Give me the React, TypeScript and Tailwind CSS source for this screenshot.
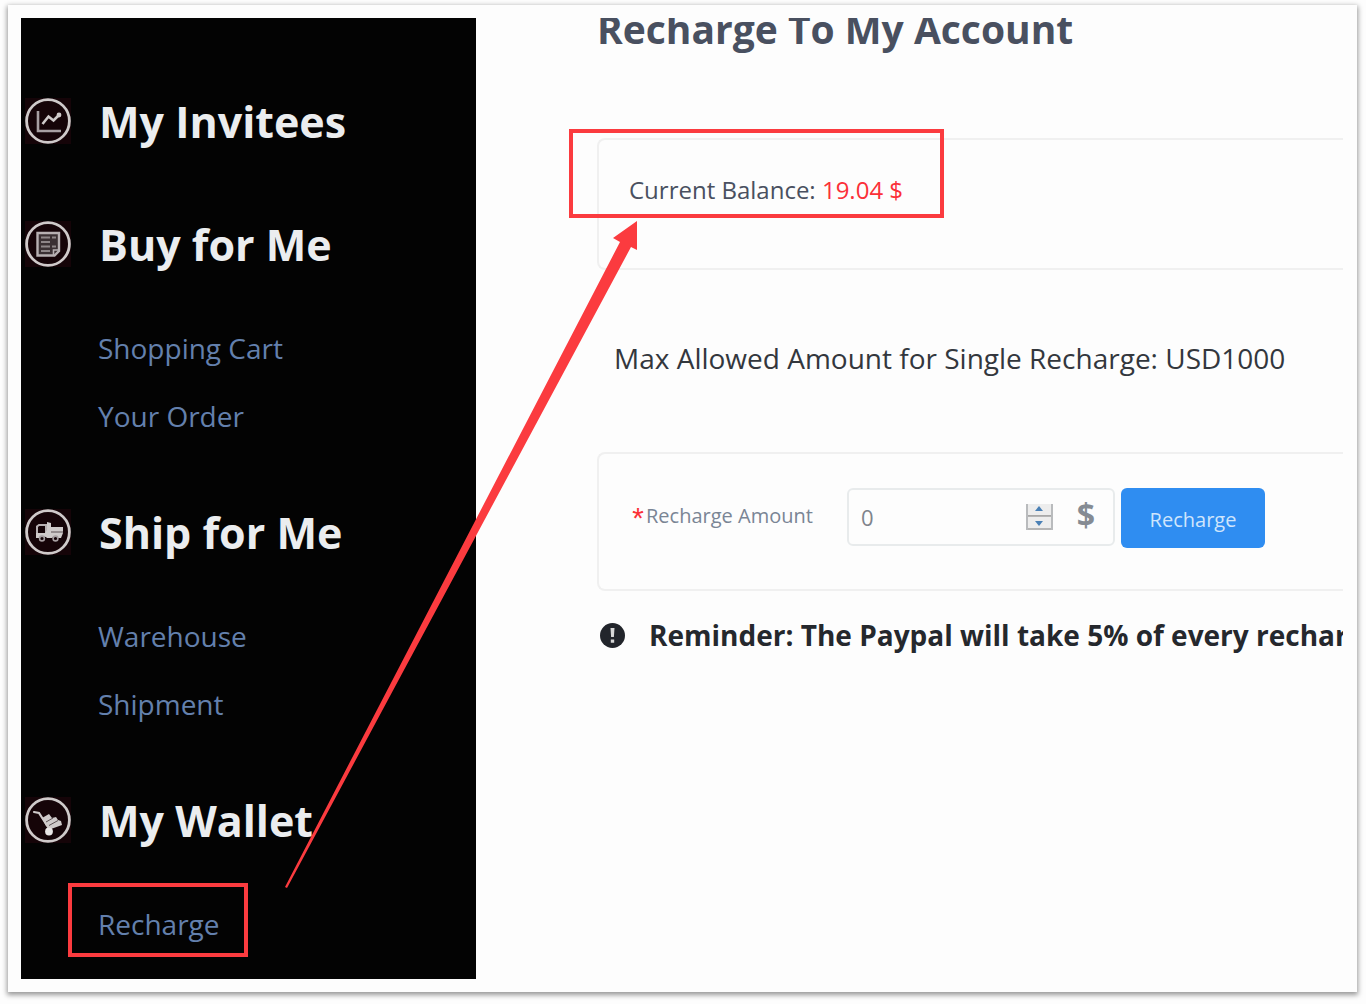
import { FormEvent, ReactNode, useState } from "react";

type Section = { title: string; icon: ReactNode; items: string[] };

const sections: Section[] = [
  { title: "My Invitees", icon: <ChartIcon />, items: [] },
  { title: "Buy for Me", icon: <OrderIcon />, items: ["Shopping Cart", "Your Order"] },
  { title: "Ship for Me", icon: <TruckIcon />, items: ["Warehouse", "Shipment"] },
  { title: "My Wallet", icon: <TrolleyIcon />, items: ["Recharge"] },
];

export default function App() {
  return (
    <div className="flex min-h-screen bg-[#fdfdfd] pt-[5px] pr-[9px] pb-3 pl-2 font-['Open_Sans','Noto_Sans',sans-serif]">
      <div className="relative flex min-w-0 flex-1 bg-[#fdfdfd] py-[13px] pr-[14px] pl-[13px] shadow-[0_2px_5px_1px_rgba(0,0,0,0.4)]">
        <Sidebar />
        <Recharge />
        <Arrow />
      </div>
    </div>
  );
}

function Sidebar() {
  return (
    <nav className="flex w-[455px] shrink-0 flex-col gap-[52px] bg-[#030303] pt-[73px] pb-[21px]">
      {sections.map((s) => (
        <section key={s.title} className="first:mb-[11px]">
          <h2 className="flex h-[60px] items-center gap-7 pl-1 text-[43px] font-bold whitespace-nowrap text-[#ebedef]">
            {s.icon}
            <span className="pt-[3px]">{s.title}</span>
          </h2>
          {s.items.length > 0 && (
            <ul className="mt-10 pl-[77px]">
              {s.items.map((item) => (
                <li key={item} className="flex h-[68px] items-center text-[28px]">
                  <a href="#" className="relative text-[#6380ad]">
                    {item}
                    {item === "Recharge" && (
                      <span className="absolute -top-5 -right-7 -bottom-3 -left-[30px] border-4 border-[#fb3b3f]" />
                    )}
                  </a>
                </li>
              ))}
            </ul>
          )}
        </section>
      ))}
    </nav>
  );
}

function Recharge() {
  const [amount, setAmount] = useState("0");

  const step = (n: number) => setAmount(String(Math.max(0, Number(amount) + n)));

  function submit(e: FormEvent) {
    e.preventDefault();
  }

  return (
    <main className="min-w-0 flex-1 overflow-hidden pl-[121px] whitespace-nowrap">
      <h1 className="text-[39px] leading-[22px] font-bold text-[#495060]">Recharge To My Account</h1>

      <div className="mt-[98px] h-[132px] rounded-l-lg border-2 border-r-0 border-[#f0f0f0] pt-8 pl-[30px]">
        <p className="text-[24px] leading-9 text-[#495060]">
          Current Balance: <span className="text-[#fb3038]">19.04 $</span>
        </p>
      </div>

      <p className="mt-[68px] pl-[17px] text-[28px] leading-10 text-[#33373d]">
        Max Allowed Amount for Single Recharge: USD1000
      </p>

      <form
        onSubmit={submit}
        className="mt-[74px] flex rounded-l-lg border-2 border-r-0 border-[#f0f0f0] pt-[34px] pb-[41px] pl-[30px]"
      >
        <label htmlFor="amount" className="flex h-14 w-[218px] items-center text-[20px] text-[#7a8595]">
          <span className="w-[17px] pt-3 font-['Liberation_Mono',monospace] text-[30px] leading-none text-[#fb3038]">*</span>
          Recharge Amount
        </label>
        <div className="flex h-[58px] w-[268px] items-center rounded-md border-2 border-[#e8ebec] pr-[18px] pl-3">
          <input
            id="amount"
            value={amount}
            onChange={(e) => setAmount(e.target.value)}
            className="min-w-0 flex-1 text-[22px] text-[#7f848c] outline-none"
          />
          <div className="mr-6 flex w-[27px] flex-col border-x-2 border-[#b9bbbd] bg-[#ededed]">
            <button type="button" aria-label="Increase" onClick={() => step(1)} className="flex h-3 items-end justify-center border-b border-[#a8a8a8] pb-1">
              <svg width="8" height="5" viewBox="0 0 8 5" fill="#4a80b5"><path d="M4 0 8 5H0z" /></svg>
            </button>
            <button type="button" aria-label="Decrease" onClick={() => step(-1)} className="flex h-[14px] items-start justify-center border-t border-b-2 border-[#b5b5b5] pt-1">
              <svg width="8" height="5" viewBox="0 0 8 5" fill="#4a80b5"><path d="M0 0h8L4 5z" /></svg>
            </button>
          </div>
          <span className="pb-1 text-[32px] leading-none font-bold text-[#858b93]">$</span>
        </div>
        <button type="submit" className="ml-1.5 h-[60px] w-[144px] rounded-md bg-[#2f8df1] pt-1 text-[20px] text-[#cfe5fc]">
          Recharge
        </button>
      </form>

      <p className="mt-6 flex items-center gap-6 pl-[3px] text-[28px] leading-10 font-bold text-[#25282d]">
        <svg width="25" height="25" viewBox="0 0 25 25" className="shrink-0">
          <circle cx="12.5" cy="12.5" r="12.5" fill="#22252b" />
          <path d="M10.5 5h4l-.6 9h-2.8zM10.8 16.5h3.4v3.2h-3.4z" fill="#d8d8d8" />
        </svg>
        Reminder: The Paypal will take 5% of every recharge
      </p>
    </main>
  );
}

// Callout linking the wallet menu entry to the balance it changes
function Arrow() {
  return (
    <>
      <div className="pointer-events-none absolute top-[124px] left-[561px] h-[89px] w-[375px] border-4 border-[#fb3b3f]" />
      <svg
        className="pointer-events-none absolute top-[216px] left-[276px]"
        width="356"
        height="670"
        viewBox="284 221 356 670"
        fill="#fb3b3f"
      >
        <path d="M637 221 613 238 620 242 285 887 287 888 631 247 637 250z" />
      </svg>
    </>
  );
}

function IconCircle({ children }: { children: ReactNode }) {
  return (
    <svg width="46" height="46" viewBox="0 0 46 46" fill="none" className="shrink-0 bg-[#150408]">
      <circle cx="23" cy="23" r="21.4" stroke="#cfcaca" strokeWidth="2.8" />
      {children}
    </svg>
  );
}

function ChartIcon() {
  return (
    <IconCircle>
      <path d="M13 13v20H36" stroke="#a79fa2" strokeWidth="2.6" />
      <path d="m17.5 26 6-7.5 5 4 5-5" stroke="#cfcaca" strokeWidth="2.6" />
      <circle cx="34" cy="17" r="2.4" fill="#cfcaca" />
    </IconCircle>
  );
}

function OrderIcon() {
  return (
    <IconCircle>
      <path d="M12.5 12H34v18l-4.5 4.5h-17z" fill="#3a3033" stroke="#b7b0b2" strokeWidth="2.4" />
      <path d="M28.5 34v-5H34" stroke="#b7b0b2" strokeWidth="1.6" />
      <path d="M16 16.500h9M16 21h9M16 25.500h9M16 30h9M27 16.500h4M27 25.500h4" stroke="#8e8688" strokeWidth="2" />
    </IconCircle>
  );
}

function TruckIcon() {
  return (
    <IconCircle>
      <path d="M12 28V17.5l2-1.500h7v8" stroke="#b7b0b2" strokeWidth="2" />
      <path d="M11 24h9l2-3V13l4 1v4h12v6l-2 5h-4a3 3 0 0 0-5 0h-5a3 3 0 0 0-5 0h-6z" fill="#cfcaca" />
      <path d="M26 23h12" stroke="#5a4f52" />
      <circle cx="17" cy="29.5" r="2.4" stroke="#a79fa2" strokeWidth="1.6" fill="#150408" />
      <circle cx="30.5" cy="29.5" r="2.4" stroke="#a79fa2" strokeWidth="1.6" fill="#150408" />
    </IconCircle>
  );
}

function TrolleyIcon() {
  return (
    <IconCircle>
      <path d="m9 15 5 1 9 14" stroke="#cfcaca" strokeWidth="2.2" strokeLinecap="round" />
      <path d="m17 21 7-4 3 4 4-1 2 3 3 1 1 4-11 4-5-3z" fill="#cfcaca" />
      <path d="m21 25 7-4M24 28.5l9-5" stroke="#5a4f52" />
      <circle cx="24" cy="34.5" r="3.9" fill="#e9e6e6" />
    </IconCircle>
  );
}
